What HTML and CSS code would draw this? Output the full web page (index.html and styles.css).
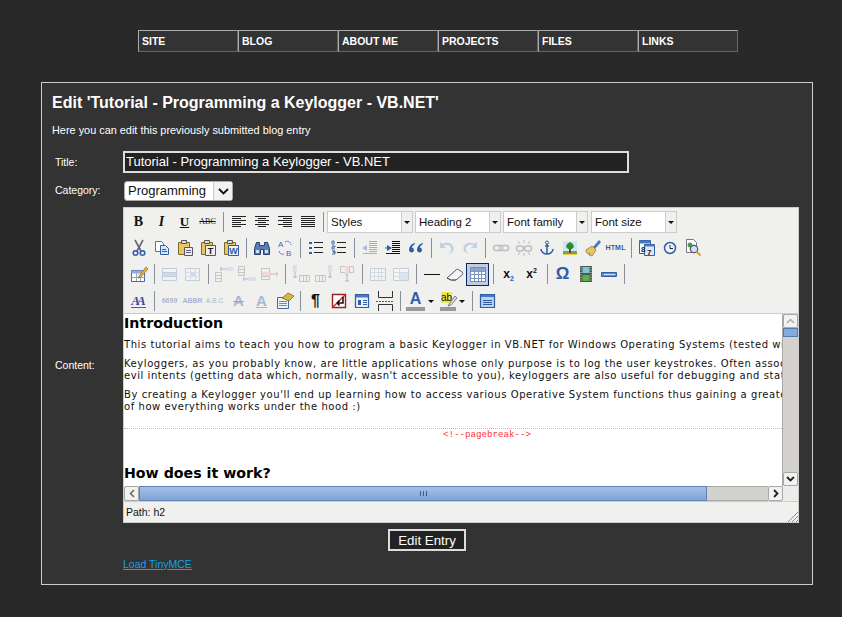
FILE: index.html
```html
<!DOCTYPE html>
<html lang="en">
<head>
<meta charset="UTF-8">
<title>Edit Entry</title>
<link rel="stylesheet" href="styles.css">
</head>
<body>
<svg class="defs" width="0" height="0">
  <symbol id="i-left" viewBox="0 0 20 20"><path d="M3 4.500h14M3 6.500h9M3 8.500h14M3 10.500h9M3 12.500h14M3 14.500h9" stroke="#222" fill="none"/></symbol>
  <symbol id="i-center" viewBox="0 0 20 20"><path d="M3 4.500h14M6 6.500h8M3 8.500h14M6 10.500h8M3 12.500h14M6 14.500h8" stroke="#222" fill="none"/></symbol>
  <symbol id="i-right" viewBox="0 0 20 20"><path d="M3 4.500h14M8 6.500h9M3 8.500h14M8 10.500h9M3 12.500h14M8 14.500h9" stroke="#222" fill="none"/></symbol>
  <symbol id="i-full" viewBox="0 0 20 20"><path d="M3 4.500h14M3 6.500h14M3 8.500h14M3 10.500h14M3 12.500h14M3 14.500h14" stroke="#222" fill="none"/></symbol>
  <symbol id="i-cut" viewBox="0 0 20 20"><path d="M6 2l6 11M14 2l-6 11" stroke="#667" stroke-width="1.600" fill="none"/><circle cx="6.500" cy="15" r="2.300" fill="none" stroke="#2f5da8" stroke-width="1.600"/><circle cx="13.500" cy="15" r="2.300" fill="none" stroke="#2f5da8" stroke-width="1.600"/></symbol>
  <symbol id="i-copy" viewBox="0 0 20 20"><path d="M3.500 3.500h6l2 2v8h-8z" fill="#fff" stroke="#4a78b8"/><path d="M8.500 7.500h5l3 3v6h-8z" fill="#dbe7f6" stroke="#2f5da8"/><path d="M10 11.500h4M10 13.500h5" stroke="#2f5da8"/></symbol>
  <symbol id="i-paste" viewBox="0 0 20 20"><path d="M3.500 4.500h11v12h-11z" fill="#e8c763" stroke="#7c6a2c"/><path d="M6.500 2.500h5v3h-5z" fill="#ddd" stroke="#555"/><path d="M9.500 9.500h8v8h-8z" fill="#e9edf3" stroke="#556"/><path d="M11 12.500h5M11 14.500h5" stroke="#667"/></symbol>
  <symbol id="i-clip" viewBox="0 0 20 20"><path d="M3.500 4.500h11v12h-11z" fill="#e8c763" stroke="#7c6a2c"/><path d="M6.500 2.500h5v3h-5z" fill="#ddd" stroke="#555"/></symbol>
  <symbol id="i-find" viewBox="0 0 20 20"><path d="M2.500 10.500l2-6h3v3h5v-3h3l2 6v6h-6v-5h-3v5h-6z" fill="#5a7fb8" stroke="#263f6e"/><path d="M4 12h3v3H4zM13 12h3v3h-3z" fill="#cfe0f5"/></symbol>
  <symbol id="i-arcs" viewBox="0 0 20 20"><path d="M10 4c3-2 6 0 6 3M9 16c-3 1-5-1-5-4" fill="none" stroke="#3a68b0" stroke-dasharray="1.500 1"/></symbol>
  <symbol id="i-bul" viewBox="0 0 20 20"><path d="M8 4.500h9M8 9.500h9M8 14.500h9" stroke="#222" fill="none"/><path d="M3 4h3v2H3zM3 9h3v2H3zM3 14h3v2H3z" fill="#2f5da8"/></symbol>
  <symbol id="i-numlines" viewBox="0 0 20 20"><path d="M8 4.500h9M8 9.500h9M8 14.500h9" stroke="#222" fill="none"/><path d="M3 3h2v3H3zM3 8h3v1H3v2h3M3 13h3v1H4h2v2H3" fill="none" stroke="#2f5da8" stroke-width=".9"/></symbol>
  <symbol id="i-outdent" viewBox="0 0 20 20"><path d="M9 3.500h8M9 5.500h8M9 7.500h8M9 9.500h8M9 11.500h8M9 13.500h8M3 15.500h14" stroke="#333" fill="none"/><path d="M7 7v6L2 10z" fill="#2f5da8"/></symbol>
  <symbol id="i-indent" viewBox="0 0 20 20"><path d="M9 3.500h8M9 5.500h8M9 7.500h8M9 9.500h8M9 11.500h8M9 13.500h8M3 15.500h14" stroke="#111" fill="none"/><path d="M4 7v6l5-3z" fill="#2f5da8"/><path d="M2 10h3" stroke="#2f5da8"/></symbol>
  <symbol id="i-quote" viewBox="0 0 20 20"><path d="M9 5C5 6 3 9 3 12a2.500 2.500 0 1 0 3-2.500C6 8 7.500 7 9 6zM17 5c-4 1-6 4-6 7a2.500 2.500 0 1 0 3-2.500c0-1.500 1.500-2.500 3-3.500z" fill="#2f5da8"/></symbol>
  <symbol id="i-undo" viewBox="0 0 20 20"><path d="M3 4v6h6L6.500 7.500C9 6 13 7 14 10c.6 2-.3 4-2 5.500 3-.5 5-3 4.500-6C16 5.500 10 3 5.500 6z" fill="#6d96cc"/></symbol>
  <symbol id="i-redo" viewBox="0 0 20 20"><path d="M17 4v6h-6l2.500-2.500C11 6 7 7 6 10c-.6 2 .3 4 2 5.500-3-.5-5-3-4.500-6C4 5.500 10 3 14.500 6z" fill="#6d96cc"/></symbol>
  <symbol id="i-link" viewBox="0 0 20 20"><rect x="2.500" y="7.500" width="9" height="5" rx="2.500" fill="none" stroke="#667" stroke-width="1.500"/><rect x="8.500" y="7.500" width="9" height="5" rx="2.500" fill="none" stroke="#667" stroke-width="1.500"/></symbol>
  <symbol id="i-unlink" viewBox="0 0 20 20"><rect x="2.500" y="8" width="7" height="5" rx="2.500" fill="none" stroke="#667" stroke-width="1.500"/><rect x="10.500" y="8" width="7" height="5" rx="2.500" fill="none" stroke="#667" stroke-width="1.500"/><path d="M10 2v3M10 15v3M4 3l2 3M16 3l-2 3M4 17l2-3M16 17l-2-3" stroke="#667"/></symbol>
  <symbol id="i-anchor" viewBox="0 0 20 20"><circle cx="10" cy="4.500" r="1.500" fill="none" stroke="#2f5da8"/><path d="M10 6v10M8 8h4M4 11c0 3 3 5 6 5s6-2 6-5" fill="none" stroke="#2f5da8" stroke-width="1.500"/></symbol>
  <symbol id="i-image" viewBox="0 0 20 20"><path d="M3 3h14v14H3z" fill="#cfe6f5"/><path d="M3 13h14v4H3z" fill="#63b04a"/><path d="M3 16h14v1H3z" fill="#e9c84b"/><path d="M9 10h2v5H9z" fill="#8a3a1e"/><path d="M10 4l3 2 1 3-2 2H8L6 9l1-3z" fill="#2f8a2c"/></symbol>
  <symbol id="i-clean" viewBox="0 0 20 20"><path d="M10 9l6-7 2 2-6 7z" fill="#4a78b8"/><path d="M3 12l6-4 4 4-4 6-3-1 1-2-2 1-2-2z" fill="#e7c468" stroke="#8a7433" stroke-width=".7"/></symbol>
  <symbol id="i-cal" viewBox="0 0 20 20"><path d="M2.500 2.500h11v13h-11z" fill="#fff" stroke="#2f5da8"/><path d="M2.500 2.500h11v3h-11z" fill="#4a78b8"/><path d="M7.500 6.500h10v11h-10z" fill="#dde7f5" stroke="#2f5da8"/><path d="M7.500 6.500h10v2h-10z" fill="#4a78b8"/></symbol>
  <symbol id="i-time" viewBox="0 0 20 20"><circle cx="10" cy="10" r="5.500" fill="#eef3fb" stroke="#2f5da8" stroke-width="1.500"/><path d="M10 7v3.500h3" fill="none" stroke="#223"/></symbol>
  <symbol id="i-preview" viewBox="0 0 20 20"><path d="M3.500 1.500h7l3 3v10h-10z" fill="#fff" stroke="#778"/><circle cx="7" cy="7" r="2.500" fill="#4b9a4b"/><circle cx="11" cy="11" r="3.700" fill="#cfe0f5" stroke="#556" stroke-width="1.200"/><path d="M13.500 13.500l4 4" stroke="#c8a23a" stroke-width="2"/></symbol>
  <symbol id="i-tableprops" viewBox="0 0 20 20"><path d="M2.500 6.500h13v11h-13z" fill="#fff" stroke="#4a6a9c"/><path d="M2.500 6.500h13v3h-13z" fill="#8fb0dc"/><path d="M2.500 13.500h13M7.500 9v8M11.500 9v8" stroke="#8fa6c8"/><path d="M10 12l7-9 2 2-7 8-3 1z" fill="#e7b53a" stroke="#8a6a1c" stroke-width=".7"/></symbol>
  <symbol id="i-rowprops" viewBox="0 0 20 20"><path d="M2.500 4.500h14v12h-14z" fill="#f4f6fa" stroke="#6f8cb8"/><path d="M3 8h13v4H3z" fill="#8fb0dc"/><path d="M2.500 8.500h14M2.500 12.500h14" stroke="#6f8cb8"/></symbol>
  <symbol id="i-cellprops" viewBox="0 0 20 20"><path d="M2.500 4.500h14v12h-14z" fill="#f4f6fa" stroke="#6f8cb8"/><path d="M7 8h5v4H7z" fill="#8fb0dc"/><path d="M2.500 8.500h14M2.500 12.500h14M7.500 4.500v12M12.500 4.500v12" stroke="#a9bcd6"/></symbol>
  <symbol id="i-rowbefore" viewBox="0 0 20 20"><path d="M1.500 8.500h6v9h-6zM1.500 11.500h6M1.500 14.500h6" fill="none" stroke="#777"/><path d="M12 3h7v4h-7z" fill="#a9c3e6"/><path d="M6 5h6M6 5l2-2M6 5l2 2" stroke="#2f5da8" fill="none"/></symbol>
  <symbol id="i-rowafter" viewBox="0 0 20 20"><path d="M1.500 2.500h6v9h-6zM1.500 5.500h6M1.500 8.500h6" fill="none" stroke="#777"/><path d="M12 13h7v4h-7z" fill="#a9c3e6"/><path d="M6 15h6M6 15l2-2M6 15l2 2" stroke="#2f5da8" fill="none"/></symbol>
  <symbol id="i-rowdel" viewBox="0 0 20 20"><path d="M1.500 4.500h8v11h-8zM1.500 8.500h8M1.500 12.500h8" fill="none" stroke="#777"/><path d="M2 8h9v4H2z" fill="#f0b0b0"/><path d="M10 10h8M18 10l-2-2M18 10l-2 2" stroke="#c05050" fill="none"/></symbol>
  <symbol id="i-colbefore" viewBox="0 0 20 20"><path d="M8.500 11.500h10v6h-10zM12.500 11.500v6M15.500 11.500v6" fill="none" stroke="#777"/><path d="M2 1h4v7H2z" fill="#a9c3e6"/><path d="M4 8v6M4 14l-2-2M4 14l2-2" stroke="#2f5da8" fill="none"/></symbol>
  <symbol id="i-colafter" viewBox="0 0 20 20"><path d="M1.500 11.500h10v6h-10zM5.500 11.500v6M8.500 11.500v6" fill="none" stroke="#777"/><path d="M14 1h4v7h-4z" fill="#a9c3e6"/><path d="M16 8v6M16 14l-2-2M16 14l2-2" stroke="#2f5da8" fill="none"/></symbol>
  <symbol id="i-coldel" viewBox="0 0 20 20"><path d="M3.500 2.500h13v6h-13zM8.500 2.500v6M12.500 2.500v6" fill="none" stroke="#777"/><path d="M8 2h4v10H8z" fill="#f0b0b0"/><path d="M10 10v8M10 18l-2-2M10 18l2-2" stroke="#2f5da8" fill="none"/></symbol>
  <symbol id="i-split" viewBox="0 0 20 20"><path d="M2.500 4.500h15v12h-15z" fill="#fff" stroke="#6f8cb8"/><path d="M2.500 8.500h15M2.500 12.500h15M6.500 4.500v12M10.500 4.500v12M13.500 4.500v12" stroke="#9db2d0"/></symbol>
  <symbol id="i-merge" viewBox="0 0 20 20"><path d="M2.500 4.500h15v12h-15z" fill="#fff" stroke="#6f8cb8"/><path d="M8 8h9v8H8z" fill="#b9cfec"/><path d="M2.500 8.500h15M2.500 12.500h5M8.500 4.500v12" stroke="#9db2d0"/></symbol>
  <symbol id="i-hr" viewBox="0 0 20 20"><path d="M2 10.500h16" stroke="#111" fill="none"/></symbol>
  <symbol id="i-erase" viewBox="0 0 20 20"><path d="M2 14l9-8c1-1 2-1 3 0l3 2c1 1 1 2 0 3l-6 5H6z" fill="#f4f6f8" stroke="#556"/><path d="M2 14l4 2h5" fill="#cdd6e2" stroke="#556"/></symbol>
  <symbol id="i-table" viewBox="0 0 20 20"><path d="M2.500 3.500h15v14h-15z" fill="#fff" stroke="#6f8cb8"/><path d="M3 4h14v3H3z" fill="#8fa9d0"/><path d="M2.500 7.500h15M2.500 10.500h15M2.500 14.500h15M6.500 4v13M10.500 4v13M13.500 4v13" stroke="#7f97bd"/></symbol>
  <symbol id="i-media" viewBox="0 0 20 20"><path d="M4 2h12v16H4z" fill="#4a5a4a"/><path d="M6.500 3h7v6h-7z" fill="#7cc4d8"/><path d="M6.500 11h7v6h-7z" fill="#5cb04c"/><path d="M5 3v14M15 3v14" stroke="#cdd" stroke-dasharray="1 1.500"/></symbol>
  <symbol id="i-bar" viewBox="0 0 20 20"><path d="M2.500 8.500h15v4h-15z" fill="#5c8fd4" stroke="#2f5da8"/><path d="M5 10.500h11" stroke="#cfe0f5"/></symbol>
  <symbol id="i-attr" viewBox="0 0 20 20"><path d="M2.500 6.500h11v11h-11z" fill="#eef2f8" stroke="#4a6a9c"/><path d="M4 10.500h8M4 12.500h8M4 14.500h8" stroke="#6f8cb8"/><path d="M7 7l6-5 6 3-5 5z" fill="#d9b44a" stroke="#6d5b1e" stroke-width=".7"/></symbol>
  <symbol id="i-layer" viewBox="0 0 20 20"><path d="M3.500 3.500h13v13h-13z" fill="#fff" stroke="#a02020" stroke-width="1.400"/><path d="M4 16L16 4" stroke="#d22" stroke-width="1.400"/><path d="M14 6v6H8M8 12l2.500-2.500M8 12l2.500 2.500" stroke="#111" stroke-width="1.500" fill="none"/></symbol>
  <symbol id="i-visual" viewBox="0 0 20 20"><path d="M3.500 3.500h13v13h-13z" fill="#eaf1fb" stroke="#2f5da8" stroke-width="1.200"/><path d="M4 4h12v2.500H4z" fill="#4a78b8"/><path d="M6 9h3v5H6z" fill="#2f5da8"/><path d="M11 9.500h4M11 11.500h4M11 13.500h4" stroke="#2f5da8"/></symbol>
  <symbol id="i-pagebreak" viewBox="0 0 20 20"><path d="M3.500 0v6.500h14V0M3.500 20v-6.500h14V20" fill="none" stroke="#333"/><path d="M1 10.500h18" stroke="#2f5da8" stroke-dasharray="2 1" fill="none"/></symbol>
  <symbol id="i-full-screen" viewBox="0 0 20 20"><path d="M3.500 3.500h14v13h-14z" fill="#bcd3f0" stroke="#2f5da8" stroke-width="1.200"/><path d="M4 4h13v2H4z" fill="#4a78b8"/><path d="M6 9.500h9M6 11.500h9M6 13.500h9" stroke="#2f5da8"/></symbol>
</svg>

<ul class="nav">
  <li><a>SITE</a></li>
  <li><a>BLOG</a></li>
  <li><a>ABOUT ME</a></li>
  <li><a>PROJECTS</a></li>
  <li><a>FILES</a></li>
  <li><a>LINKS</a></li>
</ul>

<div class="box">
  <h1>Edit 'Tutorial - Programming a Keylogger - VB.NET'</h1>
  <p class="intro">Here you can edit this previously submitted blog entry</p>

  <form class="form">
    <label class="lbl">Title:</label>
    <div class="title-input">Tutorial - Programming a Keylogger - VB.NET</div>

    <label class="lbl">Category:</label>
    <div class="select"><span class="select-val">Programming</span><span class="select-btn"><svg width="11" height="7" viewBox="0 0 11 7"><path d="M1 1l4.500 4.500L10 1" fill="none" stroke="#111" stroke-width="1.800"/></svg></span></div>

    <label class="lbl lbl-mid">Content:</label>
    <div class="editor">
      <div class="toolbar">
        <div class="tb-row">
          <span class="b ti ti-b">B</span>
          <span class="b ti ti-i">I</span>
          <span class="b ti ti-u">U</span>
          <span class="b ti ti-s">ABC</span>
          <i class="sep"></i>
          <span class="b"><svg><use href="#i-left"/></svg></span>
          <span class="b"><svg><use href="#i-center"/></svg></span>
          <span class="b"><svg><use href="#i-right"/></svg></span>
          <span class="b"><svg><use href="#i-full"/></svg></span>
          <i class="sep"></i>
          <span class="list w86"><span class="list-val">Styles</span><span class="list-btn"></span></span>
          <span class="list w86"><span class="list-val">Heading 2</span><span class="list-btn"></span></span>
          <span class="list w85"><span class="list-val">Font family</span><span class="list-btn"></span></span>
          <span class="list w86"><span class="list-val">Font size</span><span class="list-btn"></span></span>
        </div>
        <div class="tb-row">
          <span class="b"><svg><use href="#i-cut"/></svg></span>
          <span class="b"><svg><use href="#i-copy"/></svg></span>
          <span class="b"><svg><use href="#i-paste"/></svg></span>
          <span class="b"><svg viewBox="0 0 20 20"><use href="#i-clip"/><path d="M7.500 7.500h10v10h-10z" fill="#eee" stroke="#556"/><text x="12.500" y="16" class="ic-b" font-size="9" text-anchor="middle" fill="#222">T</text></svg></span>
          <span class="b"><svg viewBox="0 0 20 20"><use href="#i-clip"/><path d="M7.500 7.500h10v10h-10z" fill="#eef2fa" stroke="#2f5da8"/><text x="12.500" y="16" class="ic-b" font-size="9" text-anchor="middle" fill="#2f5da8">W</text></svg></span>
          <i class="sep"></i>
          <span class="b"><svg><use href="#i-find"/></svg></span>
          <span class="b"><svg viewBox="0 0 20 20"><use href="#i-arcs"/><text x="3" y="9" class="ic-s" font-size="8" fill="#3a68b0">A</text><text x="11" y="18" class="ic-s" font-size="8" fill="#3a68b0">B</text></svg></span>
          <i class="sep"></i>
          <span class="b"><svg><use href="#i-bul"/></svg></span>
          <span class="b"><svg><use href="#i-numlines"/></svg></span>
          <i class="sep"></i>
          <span class="b off"><svg><use href="#i-outdent"/></svg></span>
          <span class="b"><svg><use href="#i-indent"/></svg></span>
          <span class="b"><svg><use href="#i-quote"/></svg></span>
          <i class="sep"></i>
          <span class="b off"><svg><use href="#i-undo"/></svg></span>
          <span class="b off"><svg><use href="#i-redo"/></svg></span>
          <i class="sep"></i>
          <span class="b off"><svg><use href="#i-link"/></svg></span>
          <span class="b off"><svg><use href="#i-unlink"/></svg></span>
          <span class="b"><svg><use href="#i-anchor"/></svg></span>
          <span class="b"><svg><use href="#i-image"/></svg></span>
          <span class="b"><svg><use href="#i-clean"/></svg></span>
          <span class="b ti ti-html">HTML</span>
          <i class="sep"></i>
          <span class="b"><svg viewBox="0 0 20 20"><use href="#i-cal"/><text x="4" y="14" class="ic-b" font-size="8" fill="#222">8</text><text x="10" y="16.500" class="ic-b" font-size="8" fill="#222">7</text></svg></span>
          <span class="b"><svg><use href="#i-time"/></svg></span>
          <span class="b"><svg><use href="#i-preview"/></svg></span>
        </div>
        <div class="tb-row">
          <span class="b"><svg><use href="#i-tableprops"/></svg></span>
          <i class="sep"></i>
          <span class="b off"><svg><use href="#i-rowprops"/></svg></span>
          <span class="b off"><svg><use href="#i-cellprops"/></svg></span>
          <i class="sep"></i>
          <span class="b off"><svg><use href="#i-rowbefore"/></svg></span>
          <span class="b off"><svg><use href="#i-rowafter"/></svg></span>
          <span class="b off"><svg><use href="#i-rowdel"/></svg></span>
          <i class="sep"></i>
          <span class="b off"><svg><use href="#i-colbefore"/></svg></span>
          <span class="b off"><svg><use href="#i-colafter"/></svg></span>
          <span class="b off"><svg><use href="#i-coldel"/></svg></span>
          <i class="sep"></i>
          <span class="b off"><svg><use href="#i-split"/></svg></span>
          <span class="b off"><svg><use href="#i-merge"/></svg></span>
          <i class="sep"></i>
          <span class="b"><svg><use href="#i-hr"/></svg></span>
          <span class="b"><svg><use href="#i-erase"/></svg></span>
          <span class="b active"><svg><use href="#i-table"/></svg></span>
          <i class="sep"></i>
          <span class="b ti ti-x"><span>x<sub>2</sub></span></span>
          <span class="b ti ti-x"><span>x<sup>2</sup></span></span>
          <i class="sep"></i>
          <span class="b ti ti-om">Ω</span>
          <span class="b"><svg><use href="#i-media"/></svg></span>
          <span class="b"><svg><use href="#i-bar"/></svg></span>
          <i class="sep"></i>
        </div>
        <div class="tb-row">
          <span class="b ti ti-aa"><span>AA</span></span>
          <i class="sep"></i>
          <span class="b ti ti-small off-t">6699</span>
          <span class="b ti ti-small off-t">ABBR</span>
          <span class="b ti ti-small off-t ti-thin">A.B.C.</span>
          <span class="b ti ti-a off-t"><span class="ti-del">A</span></span>
          <span class="b ti ti-a off-t"><span class="ti-ins">A</span></span>
          <span class="b"><svg><use href="#i-attr"/></svg></span>
          <i class="sep"></i>
          <span class="b ti ti-para">¶</span>
          <span class="b"><svg><use href="#i-layer"/></svg></span>
          <span class="b"><svg><use href="#i-visual"/></svg></span>
          <span class="b"><svg><use href="#i-pagebreak"/></svg></span>
          <i class="sep"></i>
          <span class="b ti ti-a ti-fore">A</span>
          <span class="drop"></span>
          <span class="b narrow"><svg viewBox="0 0 20 20"><path d="M3 1h11v11H3z" fill="#f2e64e"/><text x="3" y="10" class="ic-s" font-size="10" fill="#111">ab</text><path d="M11 13l6-8 2 2-6 7-3 1z" fill="#d8dee8" stroke="#556" stroke-width=".7"/><path d="M2 16h16v4H2z" fill="#999"/></svg></span>
          <span class="drop"></span>
          <i class="sep"></i>
          <span class="b narrow"><svg><use href="#i-full-screen"/></svg></span>
        </div>
      </div>

      <div class="edit-area">
        <div class="doc">
          <h2>Introduction</h2>
          <p>This tutorial aims to teach you how to program a basic Keylogger in VB.NET for Windows Operating Systems (tested with Windows XP and Vista).</p>
          <p>Keyloggers, as you probably know, are little applications whose only purpose is to log the user keystrokes. Often associated with hackers and<br>evil intents (getting data which, normally, wasn't accessible to you), keyloggers are also useful for debugging and statistics purposes.</p>
          <p>By creating a Keylogger you'll end up learning how to access various Operative System functions thus gaining a greater knowledge<br>of how everything works under the hood :)</p>
          <div class="pagebreak">&lt;!--pagebreak--&gt;</div>
          <h2>How does it work?</h2>
        </div>
        <div class="vscroll">
          <span class="sb-btn"><svg width="9" height="6" viewBox="0 0 9 6"><path d="M1 5l3.500-3.500L8 5" fill="none" stroke="#aaa" stroke-width="1.500"/></svg></span>
          <span class="vthumb"></span>
          <span class="vtrack"></span>
          <span class="sb-btn"><svg width="9" height="6" viewBox="0 0 9 6"><path d="M1 1l3.500 3.500L8 1" fill="none" stroke="#222" stroke-width="1.800"/></svg></span>
        </div>
      </div>

      <div class="hscroll">
        <span class="sb-btn sb-h"><svg width="6" height="9" viewBox="0 0 6 9"><path d="M5 1L1.500 4.500 5 8" fill="none" stroke="#666" stroke-width="1.500"/></svg></span>
        <span class="hthumb"><i class="grip"></i></span>
        <span class="htrack"></span>
        <span class="sb-btn sb-h"><svg width="6" height="9" viewBox="0 0 6 9"><path d="M1 1l3.500 3.500L1 8" fill="none" stroke="#222" stroke-width="1.800"/></svg></span>
        <span class="corner"></span>
      </div>

      <div class="status">
        <span>Path: h2</span>
        <svg class="resize" width="10" height="10" viewBox="0 0 10 10"><path d="M0 10L10 0M4 10l6-6M8 10l2-2" stroke="#888" fill="none"/></svg>
      </div>
    </div>

    <div class="actions">
      <button type="button" class="submit">Edit Entry</button>
    </div>
    <div class="load"><a class="load-link">Load TinyMCE</a></div>
  </form>
</div>
</body>
</html>
```

FILE: styles.css
```css
html, body {
     margin: 0;
     padding: 0;
}
body {
     background: #292929;
     color: #fff;
     font-family: "Liberation Sans", Arial, sans-serif;
     font-size: 11px;
     height: 617px;
     overflow: hidden;
}
.defs {
     position: absolute;
}
.ic-b {
     font-family: "Liberation Sans", sans-serif;
     font-weight: bold;
}
.ic-s {
     font-family: "Liberation Sans", sans-serif;
}

/* top menu */
.nav {
     display: flex;
     list-style: none;
     margin: 30px 0 0 138px;
     padding: 0;
     width: 600px;
}
.nav li {
     width: 100px;
     height: 22px;
     box-sizing: border-box;
     background: #333;
     border-top: 1px solid #aaa;
     border-left: 1px solid #aaa;
     border-bottom: 1px solid #666;
     border-right: 1px solid #666;
}
.nav li a {
     display: block;
     padding-left: 3px;
     line-height: 21px;
     font-size: 10.5px;
     font-weight: bold;
     color: #fff;
}

/* main box */
.box {
     margin: 30px 0 0 41px;
     width: 772px;
     height: 503px;
     box-sizing: border-box;
     background: #333;
     border: 1px solid #ccc;
     padding: 10px 13px 0 10px;
}
h1 {
     margin: 0;
     font-size: 16px;
     line-height: 20px;
     font-weight: bold;
}
.intro {
     margin: 10px 0 0;
     font-size: 10.9px;
     line-height: 14px;
}
.form {
     display: grid;
     grid-template-columns: 71px 676px;
     margin-top: 14px;
     row-gap: 6px;
}
.lbl {
     padding-left: 3px;
     font-size: 10.5px;
     align-self: center;
}
.title-input {
     width: 506px;
     height: 22px;
     box-sizing: border-box;
     border: 2px solid #ddd;
     background: #222;
     font-size: 13px;
     line-height: 18px;
     padding-left: 1px;
}
.select {
     display: flex;
     width: 109px;
     height: 20px;
     margin: 2px 0 0 1px;
     box-sizing: border-box;
     background: #fff;
     border: 1px solid #aaa;
     border-radius: 3px;
     color: #111;
     font-size: 13px;
     line-height: 18px;
}
.select-val {
     flex: 1;
     padding-left: 3px;
     border-right: 1px solid #ccc;
}
.select-btn {
     width: 18px;
     display: flex;
     align-items: center;
     justify-content: center;
     background: #f2f2f2;
}

/* editor */
.editor {
     width: 676px;
     height: 316px;
     box-sizing: border-box;
     border: 1px solid #ccc;
     background: #f0f0ee;
     color: #111;
     display: flex;
     flex-direction: column;
}
.toolbar {
     height: 106px;
     box-sizing: border-box;
     padding: 1px 0 0 3px;
     border-bottom: 1px solid #ccc;
}
.tb-row {
     display: flex;
     align-items: center;
     height: 26px;
}
.tb-row:last-child {
     box-sizing: border-box;
     padding-top: 2px;
}
.b {
     width: 23px;
     height: 20px;
     display: flex;
     align-items: center;
     justify-content: center;
     flex: none;
}
.b svg {
     width: 20px;
     height: 20px;
}
.b.narrow {
     width: 21px;
}
.off svg {
     opacity: .35;
}
.active {
     box-sizing: border-box;
     height: 23px;
     border: 1px solid #0a246a;
     background: #c2cbe0;
}

/* buttons whose icon is a letter */
.ti {
     font-family: "Liberation Sans", sans-serif;
     font-weight: bold;
     line-height: 20px;
     color: #111;
     white-space: nowrap;
}
.ti-b, .ti-i, .ti-u, .ti-s {
     font-family: "Liberation Serif", serif;
     font-size: 14px;
}
.ti-i {
     font-style: italic;
}
.ti-u {
     font-size: 13px;
     text-decoration: underline;
}
.ti-s {
     font-size: 8px;
     font-weight: normal;
     text-decoration: line-through;
}
.ti-html {
     font-size: 7px;
     letter-spacing: .2px;
     color: #2f5da8;
}
.ti-x {
     font-size: 12px;
}
.ti-x sub, .ti-x sup {
     font-size: 7px;
     line-height: 0;
}
.ti-x sub {
     color: #2f5da8;
}
.ti-om {
     font-size: 17px;
     color: #2f5da8;
}
.ti-aa {
     font-family: "Liberation Serif", serif;
     font-style: italic;
     font-size: 13px;
     letter-spacing: -3px;
     color: #2f4fa0;
}
.ti-aa span {
     padding-right: 3px;
     border-bottom: 1px solid #8a3ac0;
     line-height: 13px;
}
.ti-small {
     font-size: 7px;
}
.ti-thin {
     font-weight: normal;
     font-size: 6.5px;
}
.ti-a {
     font-size: 15px;
}
.off-t {
     color: #a9b8d0;
}
.ti-del {
     text-decoration: line-through;
     text-decoration-color: #e88;
}
.ti-ins {
     text-decoration: underline;
     text-decoration-color: #8c8;
}
.ti-para {
     font-size: 16px;
}
.ti-fore {
     font-size: 16px;
     color: #2f5da8;
     box-sizing: border-box;
     border-bottom: 4px solid #999;
     margin: 0 2px;
     width: 19px;
     line-height: 16px;
}

.sep {
     width: 1px;
     height: 20px;
     flex: none;
     margin: 0 3px 0 4px;
     background: #8a8f9c;
}
.drop {
     width: 0;
     height: 0;
     flex: none;
     margin: 0 3px 0 1px;
     border-left: 3px solid transparent;
     border-right: 3px solid transparent;
     border-top: 3px solid #111;
}
.list {
     display: flex;
     height: 22px;
     box-sizing: border-box;
     border: 1px solid #ccc;
     flex: none;
     margin-right: 2px;
}
.w86 {
     width: 86px;
}
.w85 {
     width: 85px;
     margin-right: 3px;
}
.list-val {
     flex: 1;
     background: #fff;
     padding-left: 3px;
     font-family: "Liberation Sans", sans-serif;
     font-size: 11.5px;
     line-height: 20px;
}
.list-btn {
     width: 10px;
     border-left: 1px solid #ccc;
     position: relative;
}
.list-btn::after {
     content: "";
     position: absolute;
     left: 2px;
     top: 9px;
     border-left: 3px solid transparent;
     border-right: 3px solid transparent;
     border-top: 3px solid #111;
}

.edit-area {
     display: flex;
     height: 172px;
     background: #fff;
}
.doc {
     flex: 1;
     min-width: 0;
     overflow: hidden;
     white-space: nowrap;
     font-family: "DejaVu Sans", Verdana, sans-serif;
     font-size: 10px;
     letter-spacing: .56px;
     line-height: 12px;
     color: #111;
}
.doc h2 {
     margin: 0;
     padding-top: 1px;
     font-size: 14.2px;
     letter-spacing: 0;
     line-height: 17px;
     font-weight: bold;
     color: #000;
}
.doc p {
     margin: 7px 0 0;
}
.pagebreak {
     width: 726px;
     height: 36px;
     box-sizing: border-box;
     margin: 15px 0 0;
     border-top: 1px dotted #bbb;
     text-align: center;
     font-family: "Liberation Mono", monospace;
     font-size: 9.2px;
     letter-spacing: 0;
     color: #f33;
     line-height: 11px;
}
.vscroll {
     width: 15px;
     flex: none;
     display: flex;
     flex-direction: column;
     background: #d3d2cf;
     border-left: 1px solid #a8a8a8;
}
.sb-btn {
     display: flex;
     align-items: center;
     justify-content: center;
     height: 14px;
     flex: none;
     box-sizing: border-box;
     background: #f2f2f0;
     border: 1px solid #a8a8a8;
     border-radius: 2px;
}
.vthumb {
     height: 9px;
     flex: none;
     background: #88aadb;
     border: 1px solid #4f7cb4;
     box-sizing: border-box;
}
.vtrack {
     flex: 1;
}
.hscroll {
     display: flex;
     height: 15px;
     background: #ececea;
}
.sb-h {
     width: 15px;
     height: 15px;
}
.hthumb {
     width: 568px;
     flex: none;
     box-sizing: border-box;
     background: linear-gradient(#a3c1e6, #7fa3d4);
     border: 1px solid #5d83b5;
     display: flex;
     align-items: center;
     justify-content: center;
}
.grip {
     width: 7px;
     height: 5px;
     background: repeating-linear-gradient(90deg, #3e5f8c 0 1px, transparent 1px 3px);
}
.htrack {
     width: 61px;
     flex: none;
     background: #d3d2cf;
     border-top: 1px solid #a8a8a8;
     border-bottom: 1px solid #a8a8a8;
     box-sizing: border-box;
}
.corner {
     flex: 1;
}
.status {
     flex: 1;
     display: flex;
     align-items: center;
     justify-content: space-between;
     border-top: 1px solid #ccc;
     padding-left: 2px;
     font-size: 10.5px;
     font-family: "Liberation Sans", sans-serif;
}
.resize {
     align-self: flex-end;
}
.actions {
     grid-column: 1 / 3;
     display: flex;
     justify-content: center;
     margin-left: 3px;
}
.submit {
     width: 78px;
     height: 22px;
     box-sizing: border-box;
     padding: 0;
     background: #222;
     border: 2px solid #ddd;
     color: #fff;
     font-family: "Liberation Sans", sans-serif;
     font-size: 13.3px;
}
.load {
     grid-column: 2;
     margin-top: 1px;
}
.load-link {
     color: #1a9fe8;
     font-size: 10.5px;
     text-decoration: underline;
}
```
